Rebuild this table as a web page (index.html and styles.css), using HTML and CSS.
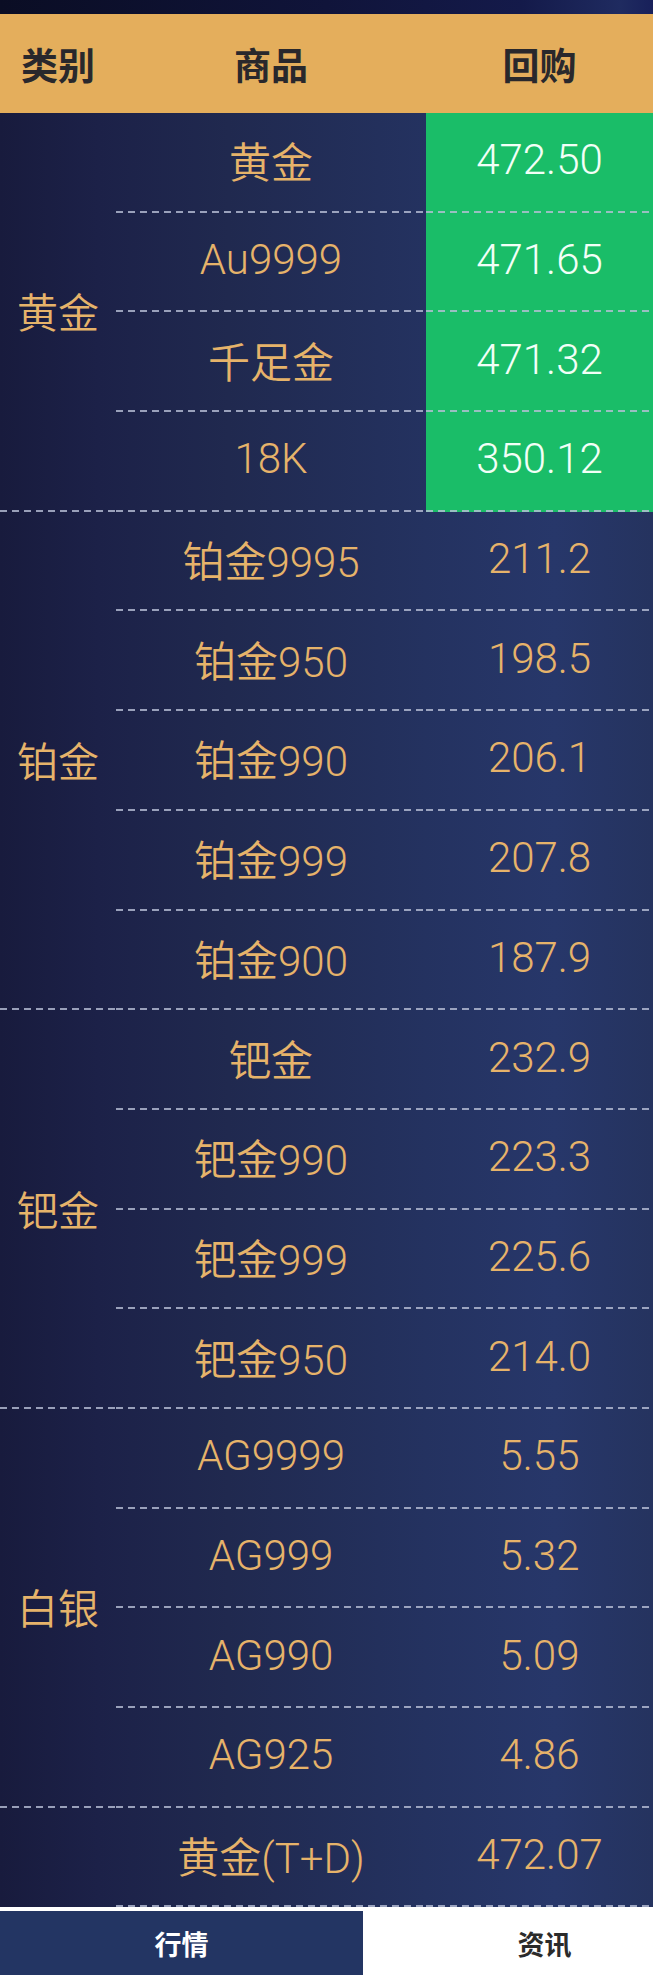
FILE: index.html
```html
<!DOCTYPE html>
<html lang="zh">
<head>
<meta charset="utf-8">
<title>回购行情</title>
<link rel="stylesheet" href="styles.css">
</head>
<body>
<div class="page">
  <div class="topbar"></div>
  <div class="thead">
    <div class="h-cat">类别</div>
    <div class="h-prod">商品</div>
    <div class="h-price">回购</div>
  </div>
  <div class="tbody">
    <div class="group">
      <div class="cat">黄金</div>
      <div class="items">
        <div class="row"><div class="prod">黄金</div><div class="price up">472.50</div></div>
        <div class="row"><div class="prod">Au9999</div><div class="price up">471.65</div></div>
        <div class="row"><div class="prod">千足金</div><div class="price up">471.32</div></div>
        <div class="row"><div class="prod">18K</div><div class="price up">350.12</div></div>
      </div>
    </div>
    <div class="group">
      <div class="cat">铂金</div>
      <div class="items">
        <div class="row"><div class="prod">铂金9995</div><div class="price">211.2</div></div>
        <div class="row"><div class="prod">铂金950</div><div class="price">198.5</div></div>
        <div class="row"><div class="prod">铂金990</div><div class="price">206.1</div></div>
        <div class="row"><div class="prod">铂金999</div><div class="price">207.8</div></div>
        <div class="row"><div class="prod">铂金900</div><div class="price">187.9</div></div>
      </div>
    </div>
    <div class="group">
      <div class="cat">钯金</div>
      <div class="items">
        <div class="row"><div class="prod">钯金</div><div class="price">232.9</div></div>
        <div class="row"><div class="prod">钯金990</div><div class="price">223.3</div></div>
        <div class="row"><div class="prod">钯金999</div><div class="price">225.6</div></div>
        <div class="row"><div class="prod">钯金950</div><div class="price">214.0</div></div>
      </div>
    </div>
    <div class="group">
      <div class="cat">白银</div>
      <div class="items">
        <div class="row"><div class="prod">AG9999</div><div class="price">5.55</div></div>
        <div class="row"><div class="prod">AG999</div><div class="price">5.32</div></div>
        <div class="row"><div class="prod">AG990</div><div class="price">5.09</div></div>
        <div class="row"><div class="prod">AG925</div><div class="price">4.86</div></div>
      </div>
    </div>
    <div class="group">
      <div class="cat cat-empty"></div>
      <div class="items">
        <div class="row"><div class="prod">黄金(T+D)</div><div class="price">472.07</div></div>
      </div>
    </div>
  </div>
  <div class="tabs">
    <div class="tab tab-active">行情</div>
    <div class="tab">资讯</div>
  </div>
</div>
</body>
</html>
```
FILE: styles.css
```css
* { box-sizing: border-box; }
html, body { margin: 0; padding: 0; background: #ffffff; }
body {
  width: 653px;
  overflow: hidden;
  font-family: Roboto, "Noto Sans CJK SC", sans-serif;
}
.page {
  width: 653px;
  overflow: hidden;
  background: #ffffff;
}
.topbar {
  height: 14px;
  background: linear-gradient(90deg, #0a0d24 0%, #10143a 50%, #141a4a 80%, #1f2b60 95%, #18205a 100%);
}
.thead {
  height: 99px;
  display: flex;
  align-items: center;
  background: #e4ae5c;
  color: #29282c;
  font-family: "Noto Sans CJK SC", sans-serif;
  font-weight: 700;
  font-size: 37px;
}
.h-cat { width: 116px; text-align: center; }
.h-prod { width: 310px; text-align: center; }
.h-price { width: 227px; text-align: center; }

.tbody {
  background: linear-gradient(90deg, #181b3d 0%, #1c2148 15%, #20294f 35%, #243260 65%, #27376a 85%, #25335f 100%);
}
.group { display: flex; }
.cat, .prod, .price {
  background-image: repeating-linear-gradient(90deg, rgba(185,192,215,0.8) 0 7px, transparent 7px 12px);
  background-size: 100% 2px;
  background-position: left bottom;
  background-repeat: no-repeat;
}
.cat {
  width: 116px;
  flex: none;
  display: flex;
  align-items: center;
  justify-content: center;
  padding-bottom: 4px;
  color: #e6b36a;
  font-family: "Noto Sans CJK SC", sans-serif;
  font-size: 41px;
  font-weight: 350;
}
.cat-empty { background-image: none; }
.items { flex: 1; display: flex; flex-direction: column; }
.row {
  height: 99.7px;
  display: flex;
}
.prod, .price {
  display: flex;
  align-items: center;
  justify-content: center;
  padding-bottom: 6px;
  color: #e6b36a;
  font-size: 42px;
  font-weight: 350;
}
.prod { width: 310px; }
.price { width: 227px; }
.price.up {
  background-color: #1abd68;
  color: #f2fff7;
}
.tabs {
  margin-top: 4px;
  display: grid;
  grid-template-columns: 363px 363px;
  height: 64px;
  font-family: "Noto Sans CJK SC", sans-serif;
  font-weight: 700;
  font-size: 27px;
}
.tab {
  display: flex;
  align-items: center;
  justify-content: center;
  background: #ffffff;
  color: #2b2b2b;
}
.tab-active {
  background: #233563;
  color: #ffffff;
}
```
